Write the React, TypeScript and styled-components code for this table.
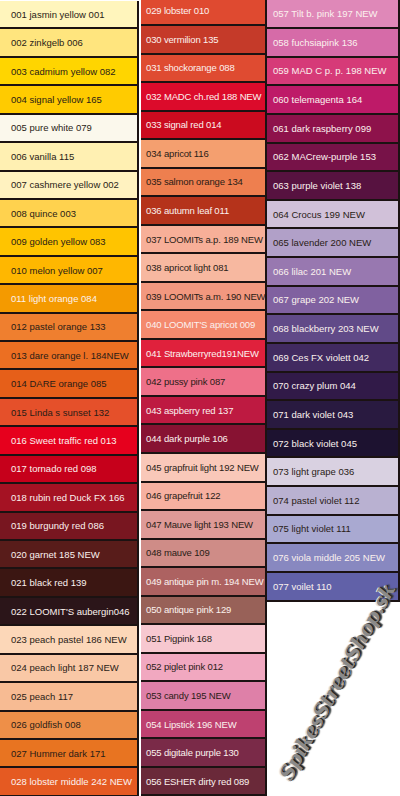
import React from "react";
import styled, { createGlobalStyle } from "styled-components";

const Global = createGlobalStyle`
  html, body { margin: 0; padding: 0; background: #ffffff; }
  body { width: 400px; height: 796px; overflow: hidden; }
`;

type Swatch = [string, string, boolean];

const col1: Swatch[] = [
  ["001 jasmin yellow 001", "#fff5bc", false],
  ["002 zinkgelb 006", "#ffe57e", false],
  ["003 cadmium yellow 082", "#ffd500", false],
  ["004 signal yellow 165", "#ffcb00", false],
  ["005 pure white 079", "#fbf8ec", false],
  ["006 vanilla 115", "#fff0b2", false],
  ["007 cashmere yellow 002", "#fff2c0", false],
  ["008 quince 003", "#ffd24e", false],
  ["009 golden yellow 083", "#ffc400", false],
  ["010 melon yellow 007", "#ffb700", false],
  ["011 light orange 084", "#f49a00", true],
  ["012 pastel orange 133", "#ef7f2f", false],
  ["013 dare orange l. 184NEW", "#ec6f22", false],
  ["014 DARE orange 085", "#e65f19", false],
  ["015 Linda s sunset 132", "#e5502a", false],
  ["016 Sweet traffic red 013", "#e6001d", true],
  ["017 tornado red 098", "#c6001b", true],
  ["018 rubin red Duck FX 166", "#a51223", true],
  ["019 burgundy red 086", "#781620", true],
  ["020 garnet 185 NEW", "#581c1a", true],
  ["021 black red 139", "#3b1612", true],
  ["022 LOOMIT'S aubergin046", "#2b1519", true],
  ["023 peach pastel 186 NEW", "#fcd7b8", false],
  ["024 peach light 187 NEW", "#f9c8a6", false],
  ["025 peach 117", "#f7bb93", false],
  ["026 goldfish 008", "#ee8f48", false],
  ["027 Hummer dark 171", "#e87421", false],
  ["028 lobster middle 242 NEW", "#e55a22", true],
];

const col2: Swatch[] = [
  ["029 lobster 010", "#df4a30", true],
  ["030 vermilion 135", "#c53a29", true],
  ["031 shockorange 088", "#df4b31", true],
  ["032 MADC ch.red 188 NEW", "#dc0b2b", true],
  ["033 signal red 014", "#cb0b1f", true],
  ["034 apricot 116", "#f49f6f", false],
  ["035 salmon orange 134", "#ee7f4f", false],
  ["036 autumn leaf 011", "#b5331b", true],
  ["037 LOOMITs a.p. 189 NEW", "#f7af98", false],
  ["038 apricot light 081", "#f7b8a0", false],
  ["039 LOOMITs a.m. 190 NEW", "#f2987f", false],
  ["040 LOOMIT'S apricot 009", "#f48a6e", true],
  ["041 Strawberryred191NEW", "#e0213c", true],
  ["042 pussy pink 087", "#ee7089", false],
  ["043 aspberry red 137", "#be1a41", true],
  ["044 dark purple 106", "#871232", true],
  ["045 grapfruit light 192 NEW", "#f9c8b9", false],
  ["046 grapefruit 122", "#f6b0a0", false],
  ["047 Mauve light 193 NEW", "#de9a97", false],
  ["048 mauve 109", "#cf8c87", false],
  ["049 antique pin m. 194 NEW", "#ad6261", true],
  ["050 antique pink 129", "#986158", true],
  ["051 Pigpink 168", "#f7c8d0", false],
  ["052 piglet pink 012", "#f1a8c0", false],
  ["053 candy 195 NEW", "#de80a8", false],
  ["054 Lipstick 196 NEW", "#be4170", true],
  ["055 digitale purple 130", "#7a2a48", true],
  ["056 ESHER dirty red 089", "#6a2939", true],
];

const col3: Swatch[] = [
  ["057 Tilt b. pink 197 NEW", "#df88b8", true],
  ["058 fuchsiapink 136", "#d66ba8", true],
  ["059 MAD C p. p. 198 NEW", "#d63a78", true],
  ["060 telemagenta 164", "#be1a68", true],
  ["061 dark raspberry 099", "#8e124b", true],
  ["062 MACrew-purple 153", "#771248", true],
  ["063 purple violet 138", "#571240", true],
  ["064 Crocus 199 NEW", "#d1c1d9", false],
  ["065 lavender 200 NEW", "#b1a0c8", false],
  ["066 lilac 201 NEW", "#9878b0", true],
  ["067 grape 202 NEW", "#8061a0", true],
  ["068 blackberry 203 NEW", "#614a88", true],
  ["069 Ces FX violett 042", "#412a60", true],
  ["070 crazy plum 044", "#311a48", true],
  ["071 dark violet 043", "#291a40", true],
  ["072 black violet 045", "#1d1230", true],
  ["073 light grape 036", "#d9d1e1", false],
  ["074 pastel violet 112", "#b9b1d1", false],
  ["075 light violet 111", "#a9a9d1", false],
  ["076 viola middle 205 NEW", "#8888c0", true],
  ["077 voilet 110", "#6161a8", true],
];

const Page = styled.div`
  position: relative;
  width: 400px;
  height: 796px;
  overflow: hidden;
  display: flex;
  align-items: flex-start;
  background: #ffffff;
  font-family: "Liberation Sans", Arial, sans-serif;
`;

const Column = styled.div<{ $width: number; $offset: number; $gap: number }>`
  display: flex;
  flex-direction: column;
  width: ${(p) => p.$width}px;
  margin-top: ${(p) => p.$offset}px;
  margin-right: ${(p) => p.$gap}px;
  border-right: 2px solid #1b1212;
  flex-shrink: 0;
`;

const Row = styled.div<{ $bg: string; $light: boolean; $h: number; $pad: number; $track: number }>`
  box-sizing: border-box;
  height: ${(p) => p.$h}px;
  flex-shrink: 0;
  display: flex;
  align-items: center;
  padding-left: ${(p) => p.$pad}px;
  background: ${(p) => p.$bg};
  color: ${(p) => (p.$light ? "#fbf1ee" : "#2a1c16")};
  font-size: 9.5px;
  letter-spacing: ${(p) => p.$track}px;
  white-space: nowrap;
  overflow: hidden;
  border-bottom: 2px solid #1b1212;
`;

const Watermark = styled.div`
  position: absolute;
  left: 337px;
  top: 682px;
  transform: translate(-50%, -50%) rotate(-61.5deg);
  font-family: "DejaVu Serif", "Liberation Serif", serif;
  font-style: italic;
  font-weight: bold;
  font-size: 20px;
  letter-spacing: -0.6px;
  white-space: nowrap;
  color: #8a8a8a;
  text-shadow: 1px 1px 0 #222222, 2px 2px 1px #444444, -1px -1px 0 #e4e4e4;
`;

function SwatchColumn({ items, width, offset, gap, h, pad, track }: { items: Swatch[]; width: number; offset: number; gap: number; h: number; pad: number; track: number }) {
  return (
    <Column $width={width} $offset={offset} $gap={gap}>
      {items.map(([label, bg, light]) => (
        <Row key={label} $bg={bg} $light={light} $h={h} $pad={pad} $track={track}>
          {label}
        </Row>
      ))}
    </Column>
  );
}

export default function App() {
  return (
    <>
      <Global />
      <Page>
        <SwatchColumn items={col1} width={137} offset={1} gap={2} h={28.43} pad={11} track={0} />
        <SwatchColumn items={col2} width={124} offset={-2.5} gap={0} h={28.54} pad={5} track={-0.15} />
        <SwatchColumn items={col3} width={131} offset={0.4} gap={0} h={28.63} pad={6} track={0} />
        <Watermark>SpikesStreetShop.sk</Watermark>
      </Page>
    </>
  );
}
